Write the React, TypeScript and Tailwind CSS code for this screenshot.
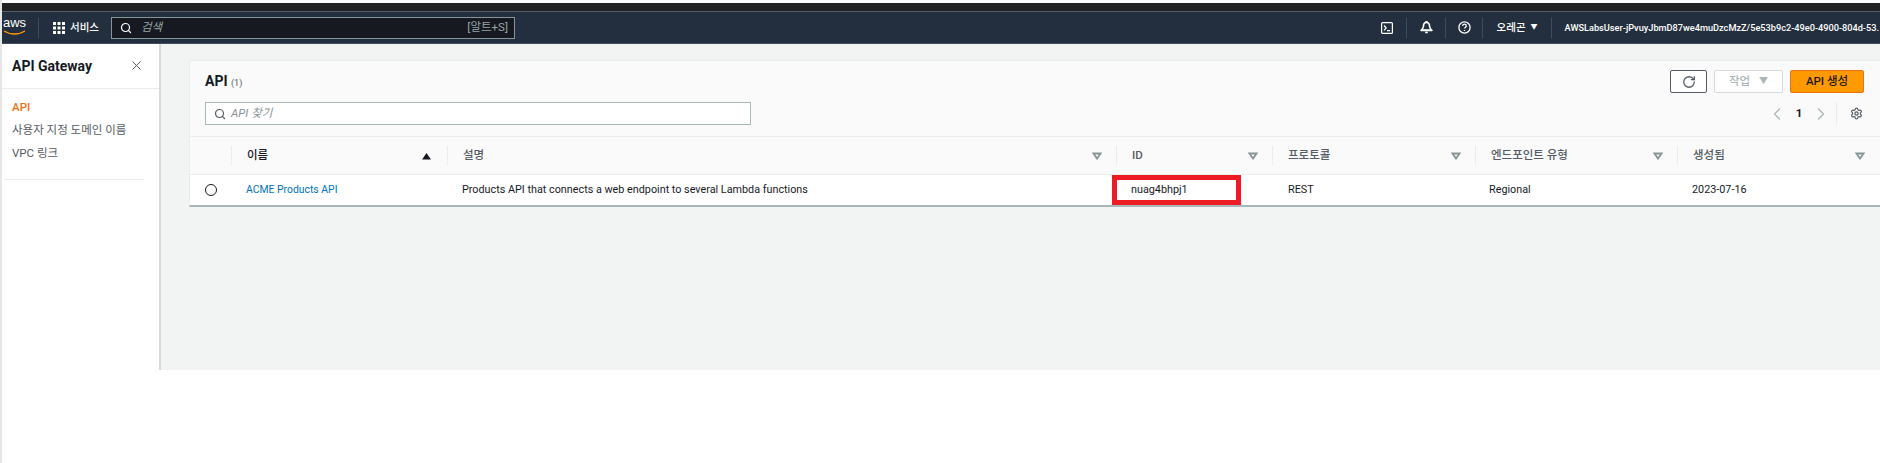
import React from "react";
import { Search, X, RotateCw, ChevronLeft, ChevronRight, Settings } from "lucide-react";

const font = { fontFamily: 'Roboto,"Noto Sans CJK KR",sans-serif' };

function Sep() {
  return <div className="w-px h-[20px] bg-[#414d5c]" />;
}

function SortDown() {
  return (
    <svg width="10" height="8" viewBox="0 0 10 8" className="shrink-0">
      <path d="M1.500 1.500h7L5 6.500z" fill="none" stroke="#879596" strokeWidth="1.800" />
    </svg>
  );
}

function HeadCell({ label, w, active }: { label: string; w: string; active?: boolean }) {
  return (
    <div className={`${w} h-full flex items-center`}>
      <div className="w-full h-[19px] border-l border-[#eaeded] flex items-center justify-between pl-[15px] pr-[14px]">
        <span className={active ? "text-[#16191f] font-medium" : "text-[#545b64] font-medium"}>{label}</span>
        {active ? (
          <svg width="10" height="8" viewBox="0 0 10 8" className="mr-[1px]">
            <path d="M0 7.500h9L4.500 1z" fill="#16191f" />
          </svg>
        ) : (
          <SortDown />
        )}
      </div>
    </div>
  );
}

export default function App() {
  return (
    <div className="w-[1880px] h-[463px] overflow-hidden bg-white border-l-2 border-[#e6e6e6] pt-[3px] text-[11.500px] flex flex-col" style={font}>
      <div className="h-[8px] bg-[#222222]" />
      <div className="h-px bg-[#545b64]" />
      <header className="h-[32px] bg-[#232f3e] border-b border-[#414d5c] flex items-center text-white shrink-0">
        <div className="w-[23px] ml-px h-full relative flex justify-center">
          <span className="text-[13px] leading-none mt-[4px]" style={{ fontFamily: '"Liberation Sans",sans-serif' }}>aws</span>
          <svg className="absolute left-[0px] top-[18px]" width="24" height="6" viewBox="0 0 24 6">
            <path d="M1 1c6 4 15 4 21 0" fill="none" stroke="#f90" strokeWidth="1.400" />
          </svg>
        </div>
        <div className="ml-[12px]"><Sep /></div>
        <svg className="ml-[14px]" width="12" height="12" viewBox="0 0 12 12" fill="#fff">
          {[0, 4.5, 9].flatMap((y) => [0, 4.5, 9].map((x) => <rect key={`${x}-${y}`} x={x} y={y} width="3" height="3" />))}
        </svg>
        <span className="ml-[5px] text-[10.500px] font-medium">서비스</span>
        <div className="ml-[12px] w-[404px] h-[22px] bg-[#16191f] border border-[#879596] flex items-center pl-[8px] pr-[6px] text-[#95a5a6]">
          <Search size={12} strokeWidth={2.400} className="text-white" />
          <span className="ml-[9px] italic text-[11.500px]">검색</span>
          <span className="ml-auto text-[11.500px]">[알트+S]</span>
        </div>
        <div className="ml-auto flex items-center h-full">
          <svg width="12" height="12" viewBox="0 0 12 12" fill="none" stroke="#fff" strokeWidth="1.200">
            <rect x="0.600" y="0.600" width="10.800" height="10.800" rx="1" />
            <path d="M3 3.500 5.200 6 3 8.300M6 8.600h3" />
          </svg>
          <div className="ml-[13px]"><Sep /></div>
          <svg className="ml-[13px]" width="13" height="13" viewBox="0 0 13 13" fill="#fff" stroke="#fff" strokeWidth="1.600">
            <path d="M6.500 1.500c-2 0-3 1.500-3 3.500 0 2-1 3-2 4h10c-1-1-2-2-2-4 0-2-1-3.500-3-3.500z" fill="none" />
            <path d="M1 9.500h11M5.200 11.500h2.600" />
            <circle cx="6.500" cy="0.800" r="0.500" />
          </svg>
          <div className="ml-[12px]"><Sep /></div>
          <svg className="ml-[12px]" width="13" height="13" viewBox="0 0 13 13" fill="none" stroke="#fff" strokeWidth="1.300">
            <circle cx="6.500" cy="6.500" r="5.600" />
            <path d="M4.700 5c0-1.100.8-1.800 1.800-1.800s1.800.7 1.800 1.700c0 1.300-1.800 1.300-1.800 2.700M6.500 9v1" />
          </svg>
          <div className="ml-[11px]"><Sep /></div>
          <span className="ml-[14px] text-[10.500px] font-medium">오레곤</span>
          <span className="ml-[5px] text-[7px]">▼</span>
          <div className="ml-[13px]"><Sep /></div>
          <span className="ml-[13px] mr-px text-[9.200px] font-medium whitespace-nowrap">AWSLabsUser-jPvuyJbmD87we4muDzcMzZ/5e53b9c2-49e0-4900-804d-53.</span>
        </div>
      </header>
      <div className="h-[326px] flex shrink-0">
        <aside className="w-[159px] h-full bg-white border-r-2 border-[#d5dbdb] shrink-0">
          <div className="h-[45px] border-b border-[#eaeded] flex items-center justify-between pl-[10px] pr-[15px]">
            <span className="text-[14px] font-bold text-[#16191f]">API Gateway</span>
            <X size={15} strokeWidth={1.600} className="text-[#545b64] mb-[2px]" />
          </div>
          <nav className="mt-[10px] pl-[10px] flex flex-col gap-[6.500px] text-[#545b64] leading-[16.500px]">
            <span className="text-[#ec7211] font-medium">API</span>
            <span>사용자 지정 도메인 이름</span>
            <span>VPC 링크</span>
          </nav>
          <div className="mt-[17px] ml-[2px] w-[140px] h-px bg-[#eaeded]" />
        </aside>
        <main className="flex-1 bg-[#f2f3f3] pt-[16px] pl-[28px]">
          <section className="bg-white border-t border-l border-[#eaeded] border-b-2 border-b-[#aab7b8] h-[147px]">
            <div className="h-[76px] bg-[#fafafa] border-b border-[#eaeded] pl-[15px] pr-[16px] pt-[9px]">
              <div className="flex items-center justify-between">
                <h2 className="text-[14px] font-bold text-[#16191f]">API <span className="text-[9px] font-normal text-[#545b64]">(1)</span></h2>
                <div className="flex items-center gap-[7px]">
                  <button className="w-[37px] h-[23px] border border-[#545b64] bg-white rounded-[2px] flex items-center justify-center"><RotateCw size={14} strokeWidth={2.200} className="text-[#545b64]" /></button>
                  <button className="w-[69px] h-[23px] border border-[#d5dbdb] bg-white rounded-[2px] flex items-center justify-center gap-[9px] text-[#aab7b8] font-medium">작업 <span className="text-[9px]">▼</span></button>
                  <button className="w-[74px] h-[23px] border border-[#ec7211] bg-[#ff9900] rounded-[2px] text-[#16191f] font-medium">API 생성</button>
                </div>
              </div>
              <div className="flex items-center mt-[9px]">
                <div className="w-[546px] h-[23px] bg-white border border-[#aab7b8] flex items-center pl-[8px] text-[#879596]">
                  <Search size={12} strokeWidth={2.400} className="text-[#545b64]" />
                  <span className="ml-[5px] italic">API 찾기</span>
                </div>
                <ChevronLeft size={20} strokeWidth={1.500} className="text-[#aab7b8] ml-auto" />
                <span className="w-[24px] text-center text-[#16191f] font-bold">1</span>
                <ChevronRight size={20} strokeWidth={1.500} className="text-[#aab7b8]" />
                <div className="ml-[5px] h-[23px] w-px bg-[#eaeded]" />
                <Settings size={13} strokeWidth={2.200} className="ml-[13px] mr-px text-[#545b64]" />
              </div>
            </div>
            <div className="flex bg-[#fafafa] border-b border-[#eaeded] h-[38px]">
              <div className="w-[41px]" />
              <HeadCell label="이름" w="w-[216px]" active />
              <HeadCell label="설명" w="w-[669px]" />
              <HeadCell label="ID" w="w-[156px]" />
              <HeadCell label="프로토콜" w="w-[203px]" />
              <HeadCell label="엔드포인트 유형" w="w-[202px]" />
              <HeadCell label="생성됨" w="w-[202px]" />
            </div>
            <div className="flex h-[30px] items-center text-[#16191f] text-[10.800px]">
              <div className="w-[41px] pl-[15px]">
                <div className="w-[12px] h-[12px] rounded-full border-[1.500px] border-[#16191f]" />
              </div>
              <div className="w-[216px] pl-[15px] text-[#0073bb] text-[10.400px]">ACME Products API</div>
              <div className="w-[669px] pl-[15px]">Products API that connects a web endpoint to several Lambda functions</div>
              <div className="w-[156px] pl-[15px] relative h-full flex items-center">
                <span>nuag4bhpj1</span>
                <div className="absolute left-[-4px] top-0 w-[129px] h-[30px] border-[5px] border-[#ed1c24]" />
              </div>
              <div className="w-[203px] pl-[16px]">REST</div>
              <div className="w-[202px] pl-[14px]">Regional</div>
              <div className="w-[202px] pl-[15px]">2023-07-16</div>
            </div>
          </section>
        </main>
      </div>
    </div>
  );
}
